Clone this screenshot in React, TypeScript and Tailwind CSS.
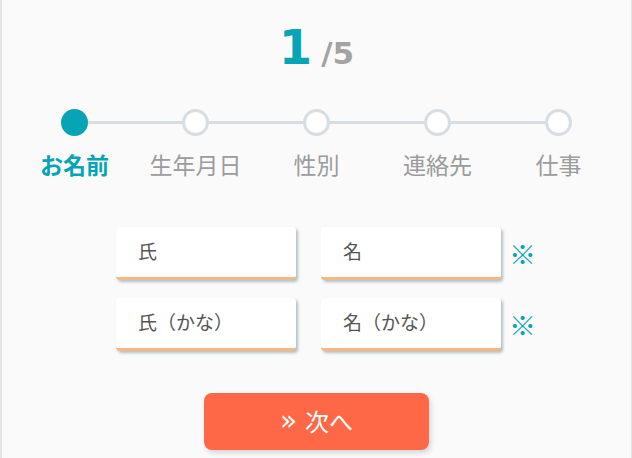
import React from "react";

const steps = ["お名前", "生年月日", "性別", "連絡先", "仕事"];

const jp = "font-['Noto_Sans_CJK_JP','Noto_Sans',sans-serif]";

function Field({ label }: { label: string }) {
  return (
    <div className="w-[180px] h-[53px] bg-white rounded-[4px] border-b-[3px] border-[#f5b884] shadow-[2px_2px_3px_rgba(40,80,90,0.35)] flex items-center pl-[22px] text-[19px] text-[#555]">
      {label}
    </div>
  );
}

export default function App() {
  const current = 0;
  return (
    <div className={`w-[632px] h-[458px] bg-[#fafafa] border-l-2 border-r border-[#e4e4e4] overflow-hidden ${jp}`}>
      {/* Counter */}
      <div className="flex justify-center items-baseline pt-[19px] font-['DejaVu_Sans',sans-serif] font-bold">
        <span className="text-[48px] leading-[56px] text-[#07a4b6]">1</span>
        <span className="text-[31px] ml-[9px] text-[#a3a3a3]">/5</span>
      </div>

      {/* Steps */}
      <div className="flex justify-center mt-[32px]">
        {steps.map((s, i) => (
          <div key={s} className="w-[121px] flex flex-col items-center">
            <div className="w-full flex items-center">
              <div className={`flex-1 h-[3px] ${i === 0 ? "" : "bg-[#d6dde3]"}`} />
              <div
                className={`w-[27px] h-[27px] rounded-full ${
                  i === current ? "bg-[#07a4b6]" : "bg-white border-[3px] border-[#d6dde3]"
                }`}
              />
              <div className={`flex-1 h-[3px] ${i === steps.length - 1 ? "" : "bg-[#d6dde3]"}`} />
            </div>
            <div
              className={`mt-[12px] text-[23px] leading-[32px] ${
                i === current ? "font-bold text-[#07a4b6]" : "text-[#9c9c9c]"
              }`}
            >
              {s}
            </div>
          </div>
        ))}
      </div>

      {/* Fields */}
      <div className="mt-[47px] flex flex-col gap-[18px]">
        {[
          ["氏", "名"],
          ["氏（かな）", "名（かな）"],
        ].map(([a, b]) => (
          <div key={a} className="flex justify-center items-center pl-[14px]">
            <Field label={a} />
            <div className="w-[25px]" />
            <Field label={b} />
            <span className="ml-[8px] w-[22px] text-[27px] leading-none font-black text-[#07a4b6]">※</span>
          </div>
        ))}
      </div>

      {/* Next */}
      <div className="flex justify-center mt-[42px]">
        <button className="w-[225px] h-[57px] rounded-[8px] bg-[#ff6847] text-white text-[24px] shadow-[2px_3px_5px_rgba(0,0,0,0.15)] flex items-center justify-center gap-[8px]">
          <span className="text-[28px] leading-none font-['DejaVu_Sans',sans-serif]">»</span>
          <span>次へ</span>
        </button>
      </div>
    </div>
  );
}
